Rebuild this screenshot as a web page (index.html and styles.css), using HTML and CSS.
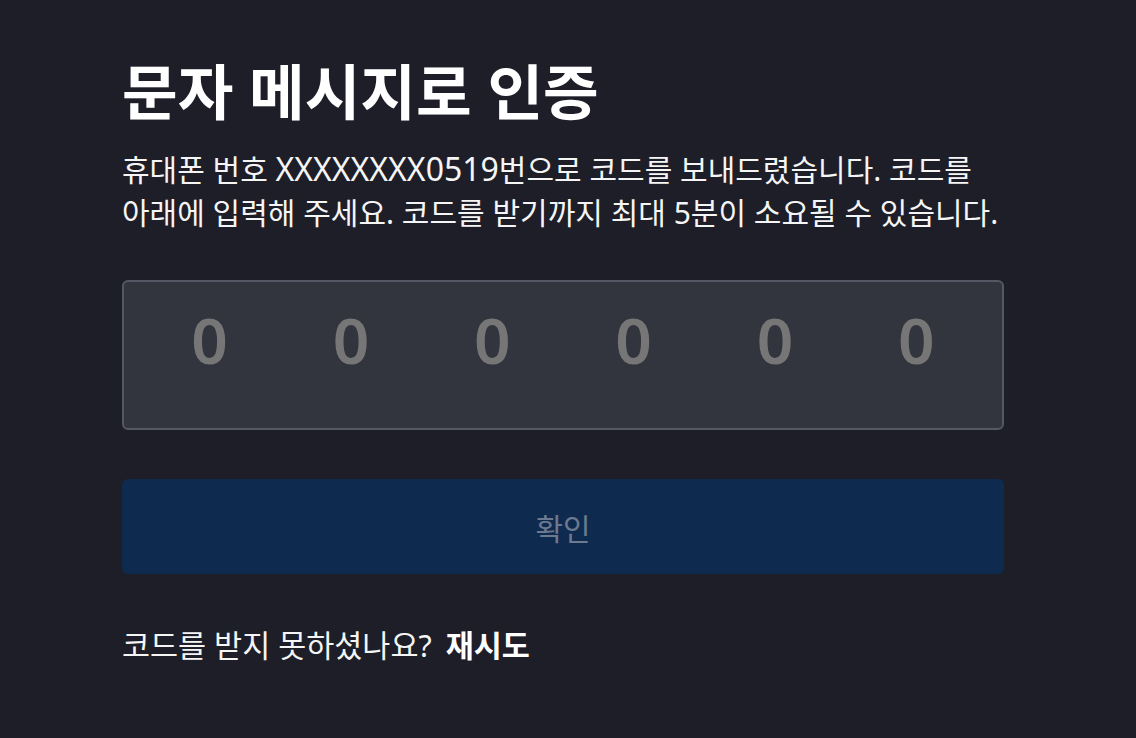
FILE: index.html
```html
<!DOCTYPE html>
<html lang="ko">
<head>
    <meta charset="UTF-8">
    <meta name="viewport" content="width=device-width, initial-scale=1.0">
    <title>문자 메시지로 인증</title>
    <link rel="stylesheet" href="styles.css">
</head>
<body>

    <div class="container">
        <h1>문자 메시지로 인증</h1>
        <p class="desc">휴대폰 번호 <span class="phone">XXXXXXXX0519</span>번으로 코드를 보내드렸습니다. 코드를 아래에 입력해 주세요. 코드를 받기까지 최대 5분이 소요될 수 있습니다.</p>

        <div class="code-box">
            <span>0</span>
            <span>0</span>
            <span>0</span>
            <span>0</span>
            <span>0</span>
            <span>0</span>
        </div>

        <button class="confirm" disabled>확인</button>

        <p class="resend">코드를 받지 못하셨나요? <a href="#">재시도</a></p>
    </div>

</body>
</html>
```

FILE: styles.css
```css
* {
    margin: 0;
    padding: 0;
    box-sizing: border-box;
}

body {
    font-family: 'Noto Sans', 'Noto Sans CJK KR', sans-serif;
    background-color: #1d1e28;
    color: #f5f5f5;
    height: 100vh;
}

.container {
    width: 882px;
    margin-left: 122px;
    padding-top: 52px;
}

h1 {
    font-size: 60.5px;
    font-weight: 700;
    line-height: 80px;
    color: #ffffff;
}

.desc {
    font-size: 30px;
    line-height: 43px;
    margin-top: 16px;
}

.phone {
    font-size: 32px;
    line-height: 1;
}

.code-box {
    margin-top: 46px;
    height: 150px;
    background-color: #32343e;
    border: 2px solid #555864;
    border-radius: 6px;
    display: grid;
    grid-template-columns: repeat(6, 1fr);
    padding: 18px 15px 0;
}

.code-box span {
    text-align: center;
    font-size: 64px;
    font-weight: 600;
    line-height: 80px;
    color: #767676;
}

.confirm {
    display: block;
    width: 100%;
    height: 95px;
    margin-top: 49px;
    border: none;
    border-radius: 6px;
    background-color: #0f2a4f;
    color: #6b7a90;
    font-family: inherit;
    font-size: 30px;
}

.resend {
    margin-top: 50px;
    font-size: 30.5px;
    line-height: 43px;
}

.resend a {
    color: #ffffff;
    font-weight: 700;
    text-decoration: none;
    margin-left: 6px;
}
```
